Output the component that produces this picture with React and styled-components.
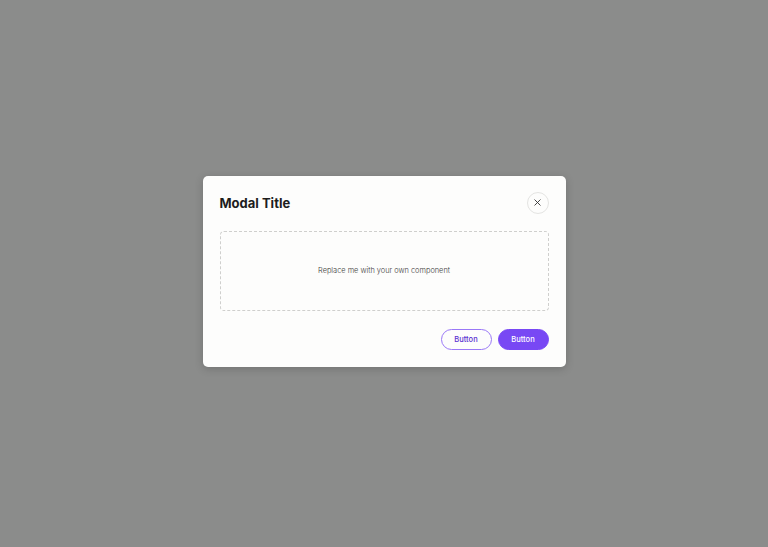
import styled, { createGlobalStyle } from 'styled-components';

const GlobalStyle = createGlobalStyle`
   * { box-sizing: border-box; }
   body {
      margin: 0;
      font-family: Inter, "Noto Sans", sans-serif;
      background-color: #8b8c8b;
   }
`;

const OverlayStyle = styled.div`
   width: 100%;
   min-height: 100vh;
   padding-bottom: 5px;
   display: flex;
   justify-content: center;
   align-items: center;
`;

const ModalStyle = styled.div`
   width: 363px;
   background-color: #fdfdfc;
   border-radius: 5px;
   padding: 16px 17px 17px 17px;
   display: flex;
   flex-direction: column;
   gap: 17px;
   box-shadow: 0 2px 8px rgba(0, 0, 0, 0.18);
`;

const HeaderStyle = styled.div`
   display: flex;
   justify-content: space-between;
   align-items: center;
   height: 22px;
`;

const TitleStyle = styled.h2`
   margin: 0;
   font-size: 13px;
   font-weight: 700;
   color: #1d1d1d;
`;

const CloseButtonStyle = styled.button`
   width: 22px;
   height: 22px;
   border-radius: 50%;
   border: 1px solid #e4e4e2;
   background: transparent;
   display: flex;
   justify-content: center;
   align-items: center;
   padding: 0;
   cursor: pointer;
   color: #333;
`;

const SlotStyle = styled.div`
   height: 80px;
   border: 1px dashed #cfcfcd;
   border-radius: 4px;
   display: flex;
   justify-content: center;
   align-items: center;
   font-size: 7.4px;
   font-weight: 300;
   color: #3a3a3a;
`;

const FooterStyle = styled.div`
   display: flex;
   justify-content: flex-end;
   gap: 6px;
   margin-top: 1px;
`;

const ButtonStyle = styled.button`
   width: 51px;
   height: 21px;
   border-radius: 11px;
   font-family: Inter, sans-serif;
   font-size: 7.5px;
   font-weight: 500;
   cursor: pointer;
   padding: 0;
   ${(props) =>
      props.$primary
         ? `background-color: #7848f4; color: #ffffff; border: 1px solid #7848f4;`
         : `background-color: transparent; color: #5a2fd0; border: 1px solid #9a78f7;`}
`;

function App() {
   return (
      <>
         <GlobalStyle />
         <OverlayStyle>
            <ModalStyle>
               <HeaderStyle>
                  <TitleStyle>Modal Title</TitleStyle>
                  <CloseButtonStyle aria-label="Close">
                     <svg width="7" height="7" viewBox="0 0 7 7">
                        <path
                           d="M0.8 0.8 L6.2 6.2 M6.2 0.8 L0.8 6.2"
                           stroke="currentColor"
                           strokeWidth="0.9"
                           strokeLinecap="round"
                        />
                     </svg>
                  </CloseButtonStyle>
               </HeaderStyle>
               <SlotStyle>Replace me with your own component</SlotStyle>
               <FooterStyle>
                  <ButtonStyle>Button</ButtonStyle>
                  <ButtonStyle $primary>Button</ButtonStyle>
               </FooterStyle>
            </ModalStyle>
         </OverlayStyle>
      </>
   );
}

export default App;
